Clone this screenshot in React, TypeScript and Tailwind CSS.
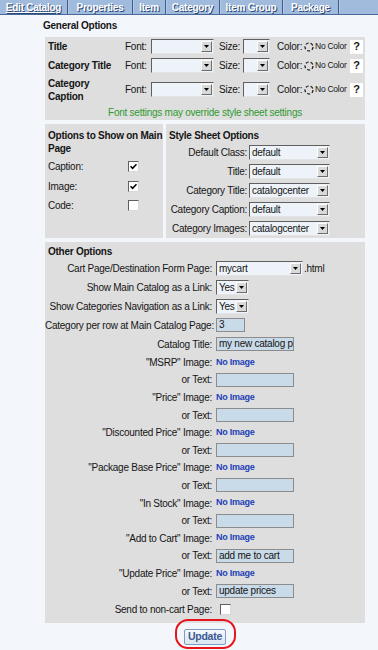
import React from "react";

const tabs = [
  { name: "Edit Catalog", w: "w-[68px]", active: true },
  { name: "Properties", w: "w-[65px]" },
  { name: "Item", w: "w-[33px]" },
  { name: "Category", w: "w-[54px]" },
  { name: "Item Group", w: "w-[63px]" },
  { name: "Package", w: "w-[56px]" },
];

function Select({ className, value }: { className: string; value?: string }) {
  return (
    <div
      className={`flex h-[15px] border border-[#5f5f5f] border-b-[#e4e4e4] border-r-[#e4e4e4] bg-[#edf3f8] ${className}`}
    >
      <span className="flex-1 overflow-hidden whitespace-nowrap pl-[2px] text-[10px] leading-[13px]">
        {value}
      </span>
      <span className="my-[1px] mr-[1px] flex w-[11px] items-center justify-center border border-white border-b-[#6d6d6d] border-r-[#6d6d6d] bg-[#d9d9d9]">
        <svg width="5" height="3" viewBox="0 0 5 3">
          <path d="M0 0h5L2.5 3z" fill="#000" />
        </svg>
      </span>
    </div>
  );
}

function Check({ on }: { on?: boolean }) {
  return (
    <span className="flex h-[11px] w-[11px] items-center justify-center border border-[#5f5f5f] border-b-[#d8d8d8] border-r-[#d8d8d8] bg-white">
      {on && (
        <svg width="7" height="7" viewBox="0 0 7 7">
          <path d="M0.5 3.2 L2.6 5.3 L6.5 1.2" stroke="#000" strokeWidth="1.6" fill="none" />
        </svg>
      )}
    </span>
  );
}

function Input({ className, value }: { className: string; value?: string }) {
  return (
    <div
      className={`h-[14px] overflow-hidden whitespace-nowrap border border-[#8c8c8c] bg-[#c9dae8] pl-[2px] text-[10px] leading-[12px] ${className}`}
    >
      {value}
    </div>
  );
}

function FontRow({ label }: { label: React.ReactNode }) {
  return (
    <div className="flex items-center">
      <div className="w-[77px] font-bold leading-[13px]">{label}</div>
      <span className="w-[26px]">Font:</span>
      <Select className="w-[63px]" />
      <span className="ml-[5px] w-[24px]">Size:</span>
      <Select className="w-[27px]" />
      <span className="ml-[7px] w-[27px]">Color:</span>
      <svg width="10" height="10" viewBox="0 0 10 10" className="mr-[1px]">
        <circle cx="5" cy="5" r="4" fill="none" stroke="#111" strokeWidth="1.2" strokeDasharray="3 2" />
      </svg>
      <span className="w-[35px] text-[8.5px]">No Color</span>
      <span className="flex h-[14px] w-[13px] items-center justify-center bg-white text-[11px] font-bold">?</span>
    </div>
  );
}

function OptRow({ label, h, children }: { label: string; h: string; children: React.ReactNode }) {
  return (
    <div className={`flex items-center ${h}`}>
      <div className="w-[167px] whitespace-nowrap text-right">{label}</div>
      <div className="ml-[4px] flex items-center">{children}</div>
    </div>
  );
}

const NoImage = () => <span className="text-[9px] font-bold text-[#2340b8]">No Image</span>;

export default function App() {
  const imgRows: [string, string][] = [
    ['"MSRP" Image:', ""],
    ['"Price" Image:', ""],
    ['"Discounted Price" Image:', ""],
    ['"Package Base Price" Image:', ""],
    ['"In Stock" Image:', ""],
    ['"Add to Cart" Image:', "add me to cart"],
    ['"Update Price" Image:', "update prices"],
  ];

  return (
    <div className="min-h-[650px] w-[378px] bg-[#f3f6fa] font-['Liberation_Sans',Arial,sans-serif] text-[10px] tracking-[-0.25px] text-[#151515]">
      {/* tab bar */}
      <div className="flex h-[15px] border-b border-[#48689a] bg-[#7b9dcb] bg-[radial-gradient(#a3bddf_0.7px,transparent_0.8px)] bg-[length:2px_2px]">
        {tabs.map((t) => (
          <div
            key={t.name}
            className={`${t.w} flex items-center justify-center border-r border-[#3e5d8c] font-bold text-white shadow-[1px_0_0_#b4c8e4] [text-shadow:1px_1px_0_#2b4873] ${t.active ? "underline" : ""}`}
          >
            {t.name}
          </div>
        ))}
      </div>

      <div className="pl-[43px] pt-[4px] font-bold leading-[13px]">General Options</div>

      <div className="ml-[45px] mt-[5px] flex w-[320px] flex-col gap-[4px]">
        {/* font settings */}
        <div className="bg-[#dedede] pl-[3px]">
          <div className="flex h-[19px] items-center">
            <FontRow label="Title" />
          </div>
          <div className="flex h-[19px] items-center">
            <FontRow label="Category Title" />
          </div>
          <div className="flex h-[29px] items-center">
            <FontRow
              label={
                <>
                  Category
                  <br />
                  Caption
                </>
              }
            />
          </div>
          <div className="flex h-[16px] items-center justify-center pr-[3px] text-[#2f9a2f]">
            Font settings may override style sheet settings
          </div>
        </div>

        {/* show options + style sheet */}
        <div className="flex gap-[3px]">
          <div className="w-[118px] bg-[#dedede] pl-[3px] pt-[5px]">
            <div className="font-bold leading-[13px]">
              Options to Show on Main
              <br />
              Page
            </div>
            <div className="mt-[2px]">
              {[
                ["Caption:", true],
                ["Image:", true],
                ["Code:", false],
              ].map(([l, on]) => (
                <div key={l as string} className="flex h-[19.5px] items-center">
                  <span className="w-[80px]">{l as string}</span>
                  <Check on={on as boolean} />
                </div>
              ))}
            </div>
          </div>
          <div className="h-[114px] flex-1 bg-[#dedede] pt-[5px]">
            <div className="pl-[3px] font-bold leading-[13px]">Style Sheet Options</div>
            <div className="mt-[1px]">
              {[
                ["Default Class:", "default"],
                ["Title:", "default"],
                ["Category Title:", "catalogcenter"],
                ["Category Caption:", "default"],
                ["Category Images:", "catalogcenter"],
              ].map(([l, v]) => (
                <div key={l} className="flex h-[19px] items-center">
                  <span className="w-[81px] whitespace-nowrap text-right">{l}</span>
                  <Select className="ml-[2px] w-[81px]" value={v} />
                </div>
              ))}
            </div>
          </div>
        </div>

        {/* other options */}
        <div className="bg-[#dedede] pb-[3px] pt-[2.5px]">
          <div className="pl-[3px] font-bold leading-[13px]">Other Options</div>
          <div className="mt-[1px]">
            <OptRow label="Cart Page/Destination Form Page:" h="h-[19px]">
              <Select className="w-[87px]" value="mycart" />
              <span className="ml-[1px]">.html</span>
            </OptRow>
            <OptRow label="Show Main Catalog as a Link:" h="h-[19px]">
              <Select className="w-[33px]" value="Yes" />
            </OptRow>
            <OptRow label="Show Categories Navigation as a Link:" h="h-[19px]">
              <Select className="w-[33px]" value="Yes" />
            </OptRow>
            <OptRow label="Category per row at Main Catalog Page:" h="h-[19px]">
              <Input className="w-[29px]" value="3" />
            </OptRow>
            <OptRow label="Catalog Title:" h="h-[19px]">
              <Input className="w-[78px]" value="my new catalog page" />
            </OptRow>
            {imgRows.map(([l, v]) => (
              <React.Fragment key={l}>
                <OptRow label={l} h="h-[17.6px]">
                  <NoImage />
                </OptRow>
                <OptRow label="or Text:" h="h-[17.6px]">
                  <Input className="w-[78px]" value={v} />
                </OptRow>
              </React.Fragment>
            ))}
            <OptRow label="Send to non-cart Page:" h="h-[20px]">
              <span className="ml-[4px]">
                <Check />
              </span>
            </OptRow>
          </div>
        </div>
      </div>

      {/* update button */}
      <div className="ml-[184px] mt-[6px] flex w-[42px]">
        <div className="relative">
          <button className="flex h-[16px] w-[42px] items-center justify-center rounded-[2px] border border-[#7f9dc0] bg-[linear-gradient(#f6f9fc,#dbe5f0)] text-[10.5px] font-bold text-[#3a5a95]">
            Update
          </button>
          <span className="pointer-events-none absolute left-[-9px] top-[-10px] h-[30px] w-[61px] rounded-[13px] border-2 border-[#e8141c]" />
        </div>
      </div>
    </div>
  );
}
